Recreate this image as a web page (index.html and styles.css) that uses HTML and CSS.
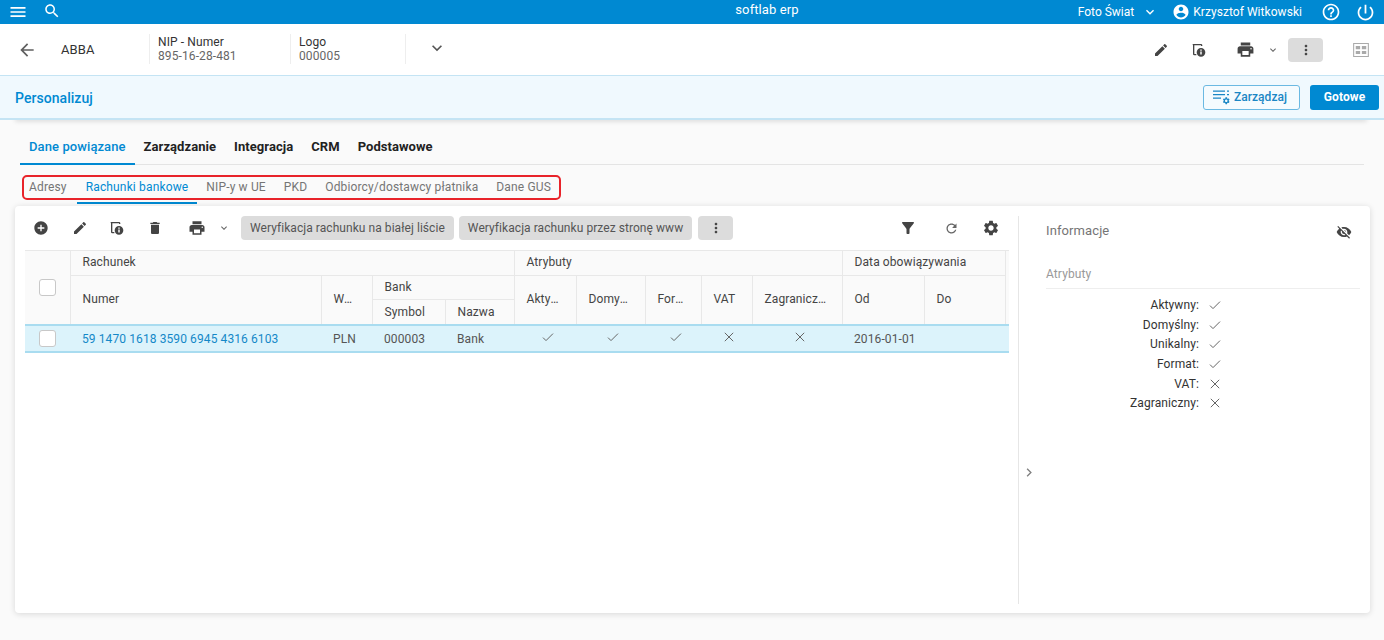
FILE: index.html
```html
<!DOCTYPE html>
<html lang="pl">
<head>
<meta charset="utf-8">
<title>softlab erp</title>
<link rel="stylesheet" href="styles.css">
</head>
<body>
<svg class="sprite" xmlns="http://www.w3.org/2000/svg">
<symbol id="menu" viewBox="0 0 24 24"><path d="M3 18h18v-2H3v2zm0-5h18v-2H3v2zm0-7v2h18V6H3z"/></symbol>
<symbol id="search" viewBox="0 0 24 24"><path d="M15.5 14h-.79l-.28-.27C15.41 12.59 16 11.11 16 9.5 16 5.91 13.09 3 9.5 3S3 5.91 3 9.5 5.91 16 9.5 16c1.61 0 3.09-.59 4.23-1.57l.27.28v.79l5 4.99L20.49 19l-4.99-5zm-6 0C7.01 14 5 11.99 5 9.5S7.01 5 9.5 5 14 7.01 14 9.5 11.99 14 9.5 14z"/></symbol>
<symbol id="back" viewBox="0 0 24 24"><path d="M20 11H7.83l5.59-5.59L12 4l-8 8 8 8 1.41-1.41L7.83 13H20v-2z"/></symbol>
<symbol id="more" viewBox="0 0 24 24"><path d="M16.59 8.59L12 13.17 7.41 8.59 6 10l6 6 6-6z"/></symbol>
<symbol id="account" viewBox="0 0 24 24"><path d="M12 2C6.48 2 2 6.48 2 12s4.48 10 10 10 10-4.48 10-10S17.52 2 12 2zm0 3c1.66 0 3 1.34 3 3s-1.34 3-3 3-3-1.34-3-3 1.34-3 3-3zm0 14.2c-2.5 0-4.71-1.28-6-3.22.03-1.99 4-3.08 6-3.08 1.99 0 5.97 1.09 6 3.08-1.29 1.94-3.5 3.22-6 3.22z"/></symbol>
<symbol id="help" viewBox="0 0 24 24"><path d="M11 18h2v-2h-2v2zm1-16C6.48 2 2 6.48 2 12s4.48 10 10 10 10-4.48 10-10S17.52 2 12 2zm0 18c-4.41 0-8-3.59-8-8s3.59-8 8-8 8 3.59 8 8-3.59 8-8 8zm0-14c-2.21 0-4 1.79-4 4h2c0-1.1.9-2 2-2s2 .9 2 2c0 2-3 1.75-3 5h2c0-2.25 3-2.5 3-5 0-2.21-1.79-4-4-4z"/></symbol>
<symbol id="power" viewBox="0 0 24 24"><path d="M13 3h-2v10h2V3zm4.83 2.17l-1.42 1.42C17.99 7.86 19 9.81 19 12c0 3.87-3.13 7-7 7s-7-3.13-7-7c0-2.19 1.01-4.14 2.58-5.42L6.17 5.17C4.23 6.82 3 9.26 3 12c0 4.97 4.03 9 9 9s9-4.03 9-9c0-2.74-1.23-5.18-3.17-6.83z"/></symbol>
<symbol id="edit" viewBox="0 0 24 24"><path d="M3 17.25V21h3.75L17.81 9.94l-3.75-3.75L3 17.25zM20.71 7.04c.39-.39.39-1.02 0-1.41l-2.34-2.34c-.39-.39-1.02-.39-1.41 0l-1.83 1.83 3.75 3.75 1.83-1.83z"/></symbol>
<symbol id="print" viewBox="0 0 24 24"><path d="M19 8H5c-1.66 0-3 1.34-3 3v6h4v4h12v-4h4v-6c0-1.66-1.34-3-3-3zm-3 11H8v-5h8v5zm3-7c-.55 0-1-.45-1-1s.45-1 1-1 1 .45 1 1-.45 1-1 1zm-1-9H6v4h12V3z"/></symbol>
<symbol id="dots" viewBox="0 0 24 24"><path d="M12 8c1.1 0 2-.9 2-2s-.9-2-2-2-2 .9-2 2 .9 2 2 2zm0 2c-1.1 0-2 .9-2 2s.9 2 2 2 2-.9 2-2-.9-2-2-2zm0 6c-1.1 0-2 .9-2 2s.9 2 2 2 2-.9 2-2-.9-2-2-2z"/></symbol>
<symbol id="add" viewBox="0 0 24 24"><path d="M12 2C6.48 2 2 6.48 2 12s4.48 10 10 10 10-4.48 10-10S17.52 2 12 2zm5 11h-4v4h-2v-4H7v-2h4V7h2v4h4v2z"/></symbol>
<symbol id="delete" viewBox="0 0 24 24"><path d="M6 19c0 1.1.9 2 2 2h8c1.1 0 2-.9 2-2V7H6v12zM19 4h-3.5l-1-1h-5l-1 1H5v2h14V4z"/></symbol>
<symbol id="filter" viewBox="0 0 24 24"><path d="M4.25 5.61C6.27 8.2 10 13 10 13v6c0 .55.45 1 1 1h2c.55 0 1-.45 1-1v-6s3.72-4.8 5.74-7.39c.51-.66.04-1.61-.79-1.61H5.04c-.83 0-1.3.95-.79 1.61z"/></symbol>
<symbol id="refresh" viewBox="0 0 24 24"><path d="M17.65 6.35C16.2 4.9 14.21 4 12 4c-4.42 0-7.99 3.58-7.99 8s3.57 8 7.99 8c3.73 0 6.84-2.55 7.73-6h-2.08c-.82 2.33-3.04 4-5.65 4-3.31 0-6-2.69-6-6s2.69-6 6-6c1.66 0 3.14.69 4.22 1.78L13 11h7V4l-2.35 2.35z"/></symbol>
<symbol id="settings" viewBox="0 0 24 24"><path d="M19.14 12.94c.04-.3.06-.61.06-.94 0-.32-.02-.64-.07-.94l2.03-1.58c.18-.14.23-.41.12-.61l-1.92-3.32c-.12-.22-.37-.29-.59-.22l-2.39.96c-.5-.38-1.03-.7-1.62-.94l-.36-2.54c-.04-.24-.24-.41-.48-.41h-3.84c-.24 0-.43.17-.47.41l-.36 2.54c-.59.24-1.13.57-1.62.94l-2.39-.96c-.22-.08-.47 0-.59.22L2.74 8.87c-.12.21-.08.47.12.61l2.03 1.58c-.05.3-.09.63-.09.94s.02.64.07.94l-2.03 1.58c-.18.14-.23.41-.12.61l1.92 3.32c.12.22.37.29.59.22l2.39-.96c.5.38 1.03.7 1.62.94l.36 2.54c.05.24.24.41.48.41h3.84c.24 0 .44-.17.47-.41l.36-2.54c.59-.24 1.13-.56 1.62-.94l2.39.96c.22.08.47 0 .59-.22l1.92-3.32c.12-.22.07-.47-.12-.61l-2.01-1.58zM12 15.6c-1.98 0-3.6-1.62-3.6-3.6s1.62-3.6 3.6-3.6 3.6 1.62 3.6 3.6-1.62 3.6-3.6 3.6z"/></symbol>
<symbol id="eyeoff" viewBox="0 0 24 24"><path d="M12 7c2.76 0 5 2.24 5 5 0 .65-.13 1.26-.36 1.83l2.92 2.92c1.51-1.26 2.7-2.89 3.43-4.75-1.73-4.39-6-7.5-11-7.5-1.4 0-2.74.25-3.98.7l2.16 2.16C10.74 7.13 11.35 7 12 7zM2 4.27l2.28 2.28.46.46C3.08 8.3 1.78 10.02 1 12c1.73 4.39 6 7.5 11 7.5 1.55 0 3.03-.3 4.38-.84l.42.42L19.73 22 21 20.73 3.27 3 2 4.27zM7.53 9.8l1.55 1.55c-.05.21-.08.43-.08.65 0 1.66 1.34 3 3 3 .22 0 .44-.03.65-.08l1.55 1.55c-.67.33-1.41.53-2.2.53-2.76 0-5-2.24-5-5 0-.79.2-1.53.53-2.2zm4.31-.78l3.15 3.15.02-.16c0-1.66-1.34-3-3-3l-.17.01z"/></symbol>
<symbol id="info" viewBox="0 0 24 24"><path d="M4 3h11a2 2 0 0 1 2 2v1h-2V5H5v13h3v2H5a2 2 0 0 1-2-2V5a1 1 0 0 1 1-2z"/><path fill-rule="evenodd" d="M15 9a6.500 6.500 0 1 1 0 13 6.500 6.500 0 0 1 0-13zm-1.100 2.400v1.900h2.200v-1.900zm0 3v4.200h2.200v-4.200z"/></symbol>
<symbol id="check" viewBox="0 0 12 12"><path d="M1 6.600 4 9.600 11 2.600" fill="none" stroke="currentColor" stroke-width="1"/></symbol>
<symbol id="cross" viewBox="0 0 12 12"><path d="M1.800 1.800 10.200 10.200M10.200 1.800 1.800 10.200" fill="none" stroke="currentColor" stroke-width="1"/></symbol>
<symbol id="chev-right" viewBox="0 0 10 12"><path d="M2.500 1 7.500 6 2.500 11" fill="none" stroke="currentColor" stroke-width="1.800"/></symbol>
<symbol id="manage" viewBox="0 0 18 15"><path d="M0 .5h12v1.300H0zM0 4h12v1.300H0zM0 7.500h8v1.300H0zM14 .5h2v1.300h-2zM14 4h2v1.300h-2z"/><use href="#settings" x="9" y="6.500" width="8.500" height="8.500"/></symbol>
<symbol id="layout" viewBox="0 0 18 16"><path fill-rule="evenodd" d="M0 0h18v16H0zM1.200 1.200v13.600h15.600V1.200z"/><path d="M3 3.500h5v3.500H3zM10 3.500h5v3.500h-5zM3 9h5v3.500H3zM10 9h5v3.500h-5z"/></symbol>
</svg>

<header class="topbar">
  <svg class="ic ic-menu"><use href="#menu"/></svg>
  <svg class="ic ic-search"><use href="#search"/></svg>
  <div class="brand">softlab erp</div>
  <div class="topbar-right">
    <span class="company">Foto Świat</span>
    <svg class="ic ic-topchev"><use href="#more"/></svg>
    <svg class="ic ic-account"><use href="#account"/></svg>
    <span class="user">Krzysztof Witkowski</span>
    <svg class="ic ic-help"><use href="#help"/></svg>
    <svg class="ic ic-power"><use href="#power"/></svg>
  </div>
</header>

<section class="record">
  <svg class="ic ic-back"><use href="#back"/></svg>
  <div class="record-name">ABBA</div>
  <div class="field field-nip"><div class="field-label">NIP - Numer</div><div class="field-value">895-16-28-481</div></div>
  <div class="field field-logo"><div class="field-label">Logo</div><div class="field-value">000005</div></div>
  <div class="field field-end"><svg class="ic ic-expand"><use href="#more"/></svg></div>
  <div class="record-actions">
    <svg class="ic ic-act ic-a1"><use href="#edit"/></svg>
    <svg class="ic ic-act ic-a2"><use href="#info"/></svg>
    <svg class="ic ic-act ic-a3"><use href="#print"/></svg>
    <svg class="ic ic-smallchev ic-a4"><use href="#more"/></svg>
    <span class="dots-btn dots-record"><svg class="ic ic-dots"><use href="#dots"/></svg></span>
    <svg class="ic ic-layout"><use href="#layout"/></svg>
  </div>
</section>

<section class="personalize">
  <div class="personalize-title">Personalizuj</div>
  <button class="btn-outline"><svg class="ic ic-manage"><use href="#manage"/></svg>Zarządzaj</button>
  <button class="btn-primary">Gotowe</button>
</section>

<nav class="tabs">
  <a class="tab tab-active">Dane powiązane</a>
  <a class="tab">Zarządzanie</a>
  <a class="tab">Integracja</a>
  <a class="tab">CRM</a>
  <a class="tab">Podstawowe</a>
</nav>

<nav class="subtabs">
  <a class="subtab subtab-first">Adresy</a>
  <a class="subtab subtab-active">Rachunki bankowe</a>
  <a class="subtab">NIP-y w UE</a>
  <a class="subtab">PKD</a>
  <a class="subtab">Odbiorcy/dostawcy płatnika</a>
  <a class="subtab">Dane GUS</a>
  <div class="highlight"></div>
</nav>

<main class="card">
  <div class="card-left">
    <div class="toolbar">
      <svg class="ic ic-tool t-add"><use href="#add"/></svg>
      <svg class="ic ic-tool t-edit"><use href="#edit"/></svg>
      <svg class="ic ic-tool t-info"><use href="#info"/></svg>
      <svg class="ic ic-tool t-del"><use href="#delete"/></svg>
      <svg class="ic ic-tool t-print"><use href="#print"/></svg>
      <svg class="ic ic-smallchev t-chev"><use href="#more"/></svg>
      <button class="btn-gray">Weryfikacja rachunku na białej liście</button>
      <button class="btn-gray">Weryfikacja rachunku przez stronę www</button>
      <span class="dots-btn dots-tool"><svg class="ic ic-dots"><use href="#dots"/></svg></span>
      <svg class="ic ic-tool t-filter"><use href="#filter"/></svg>
      <svg class="ic ic-tool t-refresh"><use href="#refresh"/></svg>
      <svg class="ic ic-tool t-gear"><use href="#settings"/></svg>
    </div>
    <table class="grid">
      <colgroup>
        <col class="c45"><col class="c251"><col class="c51"><col class="c73"><col class="c69"><col class="c62"><col class="c69"><col class="c56"><col class="c51"><col class="c90"><col class="c82"><col class="c81"><col class="c4">
      </colgroup>
      <thead>
        <tr class="r1">
          <th rowspan="3" class="cb-cell"><span class="cb"></span></th>
          <th colspan="4">Rachunek</th>
          <th colspan="5">Atrybuty</th>
          <th colspan="2">Data obowiązywania</th>
          <th rowspan="3"></th>
        </tr>
        <tr class="r2">
          <th rowspan="2">Numer</th>
          <th rowspan="2">Waluta</th>
          <th colspan="2">Bank</th>
          <th rowspan="2">Aktywny</th>
          <th rowspan="2">Domyślny</th>
          <th rowspan="2">Format</th>
          <th rowspan="2">VAT</th>
          <th rowspan="2">Zagraniczny</th>
          <th rowspan="2">Od</th>
          <th rowspan="2">Do</th>
        </tr>
        <tr class="r3">
          <th>Symbol</th>
          <th>Nazwa</th>
        </tr>
      </thead>
      <tbody>
        <tr class="row-selected">
          <td class="cb-cell"><span class="cb"></span></td>
          <td class="link">59 1470 1618 3590 6945 4316 6103</td>
          <td>PLN</td>
          <td>000003</td>
          <td>Bank</td>
          <td class="mark"><svg class="ic-mark"><use href="#check"/></svg></td>
          <td class="mark"><svg class="ic-mark"><use href="#check"/></svg></td>
          <td class="mark"><svg class="ic-mark"><use href="#check"/></svg></td>
          <td class="mark"><svg class="ic-mark"><use href="#cross"/></svg></td>
          <td class="mark"><svg class="ic-mark"><use href="#cross"/></svg></td>
          <td>2016-01-01</td>
          <td></td>
          <td></td>
        </tr>
      </tbody>
    </table>
  </div>
  <aside class="info">
    <svg class="ic collapse"><use href="#chev-right"/></svg>
    <div class="info-head">
      <span class="info-title">Informacje</span>
      <svg class="ic ic-eye"><use href="#eyeoff"/></svg>
    </div>
    <div class="info-section">Atrybuty</div>
    <dl class="attrs">
      <dt>Aktywny:</dt><dd><svg class="ic-mark"><use href="#check"/></svg></dd>
      <dt>Domyślny:</dt><dd><svg class="ic-mark"><use href="#check"/></svg></dd>
      <dt>Unikalny:</dt><dd><svg class="ic-mark"><use href="#check"/></svg></dd>
      <dt>Format:</dt><dd><svg class="ic-mark"><use href="#check"/></svg></dd>
      <dt>VAT:</dt><dd><svg class="ic-mark"><use href="#cross"/></svg></dd>
      <dt>Zagraniczny:</dt><dd><svg class="ic-mark"><use href="#cross"/></svg></dd>
    </dl>
  </aside>
</main>
</body>
</html>
```

FILE: styles.css
```css
* { box-sizing: border-box; }
html, body { margin: 0; height: 640px; overflow: hidden; }
body { background: #fafafa; font-family: Roboto, "Liberation Sans", sans-serif; font-size: 12px; color: #424242; letter-spacing: .1px; }
button { font-family: inherit; letter-spacing: inherit; cursor: pointer; }
.sprite { display: none; }
.ic { display: block; flex: none; fill: currentColor; }

.topbar { height: 24px; background: #0089d2; color: #fff; display: flex; align-items: center; position: relative; }
.ic-menu { width: 20px; height: 20px; margin-left: 8px; }
.ic-search { width: 18px; height: 18px; margin-left: 15px; margin-top: -2px; }
.brand { position: absolute; left: 0; right: 0; top: 2px; text-align: center; font-size: 13px; line-height: 16px; padding-left: 150px; }
.topbar-right { margin-left: auto; display: flex; align-items: center; font-size: 12px; }
.company { letter-spacing: 0; }
.ic-topchev { width: 16px; height: 16px; margin-left: 8px; }
.ic-account { width: 18px; height: 18px; margin-left: 14px; }
.user { margin-left: 3px; letter-spacing: .05px; }
.ic-help { width: 20px; height: 20px; margin-left: 19px; }
.ic-power { width: 21px; height: 21px; margin-left: 14px; margin-right: 8px; }

.record { height: 51px; background: #fff; display: flex; align-items: center; }
.ic-back { width: 20px; height: 20px; margin-left: 17px; color: #5f5f5f; }
.record-name { width: 88px; margin-left: 24px; font-size: 13px; color: #333; }
.field { height: 30px; border-left: 1px solid #eee; padding-left: 8px; line-height: 14px; margin-top: -2px; }
.field-nip { width: 141px; }
.field-logo { width: 115px; }
.field-end { width: 64px; display: flex; align-items: center; padding-left: 21px; }
.field-label { color: #333; margin-top: 1px; }
.field-value { color: #666; }
.ic-expand { width: 20px; height: 20px; color: #555; margin-top: -2px; }
.record-actions { margin-left: auto; display: flex; align-items: center; color: #444; }
.ic-act { width: 16px; height: 16px; }
.ic-a2 { margin-left: 22px; }
.ic-a3 { width: 19px; height: 19px; margin-left: 29px; }
.ic-smallchev { width: 12px; height: 12px; color: #666; }
.ic-a4 { margin-left: 12px; }
.dots-btn { display: flex; align-items: center; justify-content: center; height: 24px; background: #dcdcdc; border-radius: 4px; color: #444; }
.ic-dots { width: 16px; height: 16px; }
.dots-record { width: 35px; margin-left: 9px; }
.ic-layout { width: 16px; height: 14px; margin-left: 30px; margin-right: 15px; color: #aaa; }

.personalize { height: 45px; background: #f0f9fe; border: 1px solid #c4e4f4; border-width: 1px 0 2px; display: flex; align-items: center; padding: 0 5px 0 15px; position: relative; }
.personalize::after { content: ""; position: absolute; z-index: -1; left: 15px; right: 17px; bottom: 0; height: 4px; box-shadow: 0 3px 5px rgba(0,0,0,.16); }
.personalize-title { font-size: 14px; font-weight: 500; color: #0089d2; letter-spacing: .05px; margin-top: 1px; }
.btn-outline { margin-left: auto; width: 97px; height: 25px; border: 1px solid #6bb9e2; border-radius: 3px; background: #f5fbfe; color: #1b87c5; font-size: 12px; font-weight: 500; letter-spacing: .05px; display: flex; align-items: center; justify-content: center; gap: 3px; padding: 0 3px 0 0; }
.ic-manage { width: 18px; height: 15px; margin-top: 1px; }
.btn-primary { margin-left: 10px; width: 69px; height: 25px; border: 0; border-radius: 3px; background: #0089d2; color: #fff; font-size: 12px; font-weight: 700; padding: 0; }

.tabs { margin: 0 20px; height: 45px; border-bottom: 1px solid #e4e4e4; display: flex; align-items: flex-end; }
.tab { padding: 0 9px; height: 26px; line-height: 16px; font-size: 13px; font-weight: 700; color: #222; letter-spacing: .06px; margin-bottom: -1px; }
.tab-active { color: #0089d2; border-bottom: 2px solid #0089d2; font-weight: 500; letter-spacing: .09px; }

.subtabs { margin: 0 20px; height: 41px; display: flex; align-items: flex-start; position: relative; padding-top: 14px; }
.subtab { padding: 0 9px; height: 25px; line-height: 16px; color: #757575; white-space: nowrap; letter-spacing: .15px; }
.subtab-first { padding-right: 10px; }
.subtab-active { color: #0089d2; border-bottom: 2px solid #0089d2; }
.highlight { position: absolute; left: 2px; top: 10px; width: 539px; height: 25px; border: 2px solid #e8232a; border-radius: 5px; pointer-events: none; }

.card { margin: 0 14px 0 15px; height: 407px; background: #fff; border-radius: 4px; box-shadow: 0 1px 6px rgba(0,0,0,.14); display: flex; padding: 10px 0 9px 10px; position: relative; }
.card-left { width: 984px; flex: none; }
.toolbar { height: 24px; display: flex; align-items: center; color: #444; margin-bottom: 10px; }
.ic-tool { width: 16px; height: 16px; }
.t-add { margin-left: 8px; }
.t-edit { margin-left: 23px; }
.t-info { margin-left: 21px; }
.t-del { margin-left: 22px; }
.t-print { width: 18px; height: 18px; margin-left: 25px; }
.t-chev { margin-left: 12px; }
.btn-gray { height: 24px; border: 0; border-radius: 4px; background: #dcdcdc; color: #555; font-size: 12px; padding: 0 9px; margin-left: 5px; white-space: nowrap; font-weight: 400; letter-spacing: .06px; }
.t-chev + .btn-gray { margin-left: 11px; }
.dots-tool { width: 35px; margin-left: 6px; }
.t-filter { margin-left: auto; width: 18px; height: 18px; }
.t-refresh { margin-left: 27px; color: #666; width: 15px; height: 15px; }
.t-gear { width: 18px; height: 18px; margin-left: 23px; margin-right: 9px; }

.grid { width: 984px; border-collapse: collapse; table-layout: fixed; }
.c45 { width: 45px; } .c251 { width: 251px; } .c51 { width: 51px; } .c73 { width: 73px; } .c69 { width: 69px; } .c62 { width: 62px; } .c56 { width: 56px; } .c90 { width: 90px; } .c82 { width: 82px; } .c81 { width: 81px; } .c4 { width: 4px; }
.grid th { background: #fafafa; border: 1px solid #e8e8e8; font-weight: 400; text-align: left; padding: 0 14px 1px 12px; color: #444; white-space: nowrap; overflow: hidden; text-overflow: ellipsis; }
.r1 th { height: 25px; padding-bottom: 2px; }
.r2 th { height: 24px; }
.r3 th { height: 25px; padding-bottom: 0; }
.grid thead { border-bottom: 2px solid #ddd; }
.grid th:last-child[rowspan] { border-right: 0; }
.grid td { height: 27px; padding: 1px 12px 0; border-top: 2px solid #a9dcf0; border-bottom: 2px solid #a9dcf0; background: #dcf3fb; white-space: nowrap; color: #555; }
.grid .cb-cell { padding: 0 0 0 14px; border-left: 0; }
.cb { display: block; width: 17px; height: 17px; background: #fff; border: 1px solid #c8c8c8; border-radius: 3px; }
.grid .link { color: #1488c8; }
.grid .mark { padding: 1px 0 0 5px; text-align: center; }
.ic-mark { display: inline-block; width: 12px; height: 12px; color: #666; }

.info { flex: 1; border-left: 1px solid #e6e6e6; margin-left: 9px; padding: 0 10px 0 27px; position: relative; }
.collapse { position: absolute; left: 6px; top: 252px; width: 8px; height: 9px; color: #808080; fill: none; }
.info-head { display: flex; align-items: center; justify-content: space-between; height: 29px; padding-right: 8px; }
.info-title { font-size: 13px; font-weight: 400; color: #757575; letter-spacing: .1px; }
.ic-eye { width: 16px; height: 16px; color: #444; margin-top: 3px; }
.info-section { margin-top: 22px; height: 22px; border-bottom: 1px solid #eee; color: #999; font-size: 12px; line-height: 14px; letter-spacing: .1px; }
.attrs { margin: 6px 0 0; display: grid; grid-template-columns: 153px 1fr; grid-auto-rows: 19.700px; align-items: center; color: #333; }
.attrs dt { text-align: right; }
.attrs dd { margin: 0 0 0 10px; height: 12px; }
.attrs .ic-mark { display: block; }
```
